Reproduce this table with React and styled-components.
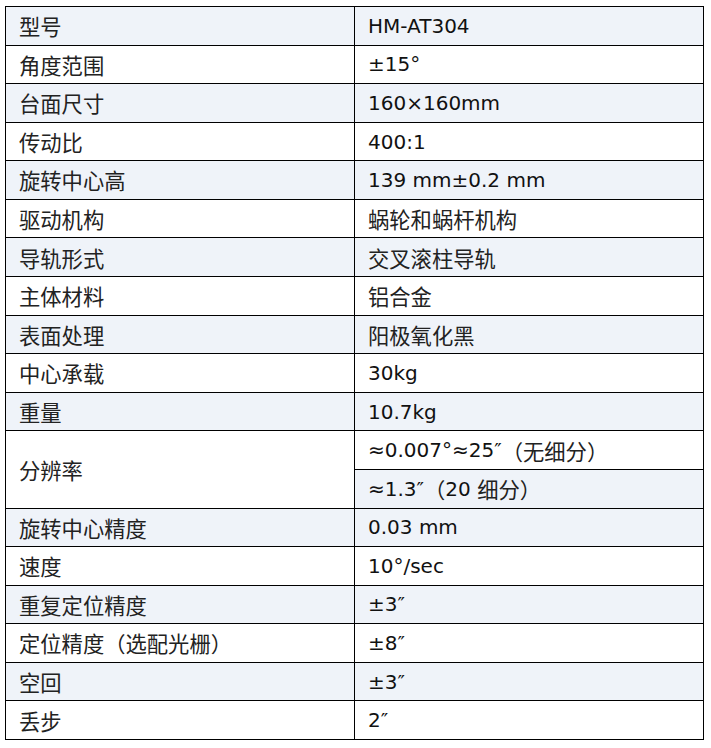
import React from 'react'
import styled, { createGlobalStyle } from 'styled-components'

const GlobalStyle = createGlobalStyle`
    body {
        margin: 0;
        background: #fff;
    }
`;

const specs = [
    ['型号', ['HM-AT304']],
    ['角度范围', ['±15°']],
    ['台面尺寸', ['160×160mm']],
    ['传动比', ['400:1']],
    ['旋转中心高', ['139 mm±0.2 mm']],
    ['驱动机构', ['蜗轮和蜗杆机构']],
    ['导轨形式', ['交叉滚柱导轨']],
    ['主体材料', ['铝合金']],
    ['表面处理', ['阳极氧化黑']],
    ['中心承载', ['30kg']],
    ['重量', ['10.7kg']],
    ['分辨率', ['≈0.007°≈25″（无细分）', '≈1.3″（20 细分）']],
    ['旋转中心精度', ['0.03 mm']],
    ['速度', ['10°/sec']],
    ['重复定位精度', ['±3″']],
    ['定位精度（选配光栅）', ['±8″']],
    ['空回', ['±3″']],
    ['丢步', ['2″']],
];

// chinese runs are set a bit larger than latin ones
const renderText = (text) =>
    text.split(/([\u3000-\u9fff\uff00-\uffef]+)/).filter(Boolean).map((part, k) =>
        /[\u3000-\u9fff\uff00-\uffef]/.test(part)
            ? <Cjk key={k}>{part}</Cjk>
            : <span key={k}>{part}</span>
    );

function App() {
    let row = 1;

    return (
        <Page>
            <GlobalStyle />
            <Table>
                {specs.map(([label, values], i) => {
                    const start = row;
                    row += values.length;
                    const striped = i % 2 === 0;
                    return (
                        <React.Fragment key={label}>
                            <Cell
                                $striped={striped}
                                style={{ gridRow: `${start} / span ${values.length}`, gridColumn: 1 }}
                            >
                                {renderText(label)}
                            </Cell>
                            {values.map((v, j) => (
                                <Cell
                                    key={v}
                                    $striped={values.length > 1 ? j % 2 === 1 : striped}
                                    style={{ gridRow: start + j, gridColumn: 2 }}
                                >
                                    {renderText(v)}
                                </Cell>
                            ))}
                        </React.Fragment>
                    );
                })}
            </Table>
        </Page>
    )
}

const Page = styled.div`
    padding: 6px 0 0 5px;
`;

const Table = styled.div`
    display: grid;
    grid-template-columns: 349px 349px;
    grid-template-rows: repeat(19, 38.58px);
    width: 699px;
    border-top: 1px solid #000;
    border-left: 1px solid #000;
    box-sizing: border-box;
    font-family: "DejaVu Sans", "Noto Sans CJK SC", sans-serif;
    font-size: 20px;
    color: #111;
`;

const Cell = styled.div`
    display: flex;
    align-items: center;
    padding-left: 13px;
    box-sizing: border-box;
    border-right: 1px solid #000;
    border-bottom: 1px solid #000;
    background: ${p => (p.$striped ? '#eff3f9' : '#fff')};
    white-space: pre;
    line-height: 1.2;
`;

const Cjk = styled.span`
    font-family: "Noto Sans CJK SC", sans-serif;
    font-size: 21.3px;
    line-height: 1;
    vertical-align: 1px;
    color: #222;
`;

export default App
